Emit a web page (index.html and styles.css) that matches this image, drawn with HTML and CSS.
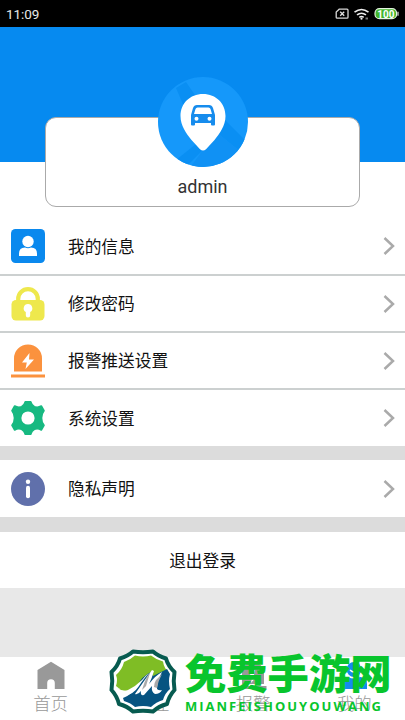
FILE: index.html
```
<!DOCTYPE html>
<html lang="zh-CN">
<head>
<meta charset="utf-8">
<title>我的</title>
<link rel="stylesheet" href="styles.css">
</head>
<body>
<div class="screen">
  <header class="status">
    <span class="time">11:09</span>
    <svg class="status-icons" width="66" height="16" viewBox="0 0 66 16">
      <path d="M4.200 3.200H12q1 0 1 1v7q0 1-1 1H2.200q-1 0-1-1V6z" fill="none" stroke="#d8d8d8" stroke-width="1.3"/>
      <path d="M5.200 5.700l4 4m0-4l-4 4" stroke="#e4e4e4" stroke-width="1.3"/>
      <g fill="none" stroke="#eee" stroke-width="1.6"><path d="M19.500 6.200q7-5.400 14 0M22 8.900q4.500-3.400 9 0M24.300 11.300q2.200-1.500 4.400 0"/></g>
      <circle cx="26.500" cy="12.700" r="1.100" fill="#eee"/><path d="M30.500 11.500h2.500v2h-2.500z" fill="#777"/>
      <rect x="40" y="2.700" width="21.600" height="10" rx="4.500" fill="#43b62d" stroke="#e4f4df" stroke-width="1.200"/>
      <path d="M63 5.800v4" stroke="#ddd" stroke-width="1.200"/>
      <text x="50.800" y="11.500" class="battery-text">100</text>
    </svg>
  </header>
  <section class="hero">
    <div class="card">
      <svg class="avatar" width="90" height="90" viewBox="0 0 90 90">
        <defs><clipPath id="disc"><circle cx="45" cy="45" r="45"/></clipPath></defs>
        <g clip-path="url(#disc)">
          <path fill="#1598fa" d="M0 0h90v90H0z"/>
          <path fill="#0a8ff3" d="M18 11l10-6 11 16-12 11zM66 42l24 24-6 10-27-22z"/>
          <path fill="#0a8ff3" d="M38 67l7 6-17 17-10-7z"/>
          <path fill="#1091f4" d="M45 73l12-19 27 22-20 20H28z"/>
        </g>
        <path fill="#fff" d="M45 17c-13 0-22.500 9.500-22.500 22 0 10 6 17.500 11 24l8.500 9.200q3 2.600 6 0L56.500 63c5-6.500 11-14 11-24 0-12.500-9.500-22-22.500-22z"/>
        <path fill="#168ced" fill-rule="evenodd" d="M39 28h12q3 0 4 3l2 7v9.500q0 1-1 1h-2q-1 0-1-1V46H37v1.500q0 1-1 1h-2q-1 0-1-1V38l2-7q1-3 4-3zm.5 2.500q-1.500 0-2 1.500l-1.500 5h18l-1.500-5q-.5-1.500-2-1.500zM38.500 39.700a2 2 0 100 4 2 2 0 000-4zm13 0a2 2 0 100 4 2 2 0 000-4z"/>
      </svg>
      <span class="name">admin</span>
    </div>
  </section>
  <main class="menu settings">
    <div class="row">
      <svg class="icon" viewBox="0 0 34 34"><rect width="34" height="34" rx="4.500" fill="#0a89ee"/><circle cx="17" cy="12.500" r="5.700" fill="#fff"/><path fill="#fff" d="M8 27v-2.500q0-6 6-6 3 1.500 6 0 6 0 6 6V27z"/></svg>
      <span class="label">我的信息</span><svg class="chevron" viewBox="0 0 12 18"><path d="M1.500 1L10 9l-8.500 8"/></svg>
    </div>
    <div class="row">
      <svg class="icon" viewBox="0 0 34 34"><path d="M7.200 15v-3a9.800 9.800 0 0119.600 0v3" fill="none" stroke="#eee84d" stroke-width="4.200"/><rect x=".5" y="13" width="33" height="20.500" rx="4.500" fill="#eee84d"/><path fill="#fff" d="M17 17a4.300 4.300 0 00-2.200 8v3.200a2.200 2.200 0 004.400 0v-3.200a4.300 4.300 0 00-2.200-8z"/></svg>
      <span class="label">修改密码</span><svg class="chevron" viewBox="0 0 12 18"><path d="M1.500 1L10 9l-8.500 8"/></svg>
    </div>
    <div class="row">
      <svg class="icon" viewBox="0 0 34 34"><path fill="#fb923e" d="M3 27.500V14.500a14 14 0 0128 0v13zM0 30.500h34v3H0z"/><path fill="#fff" d="M18.500 9L11 18.500h4.800L14.500 25 23 15.500h-5z"/></svg>
      <span class="label">报警推送设置</span><svg class="chevron" viewBox="0 0 12 18"><path d="M1.500 1L10 9l-8.500 8"/></svg>
    </div>
    <div class="row">
      <svg class="icon" viewBox="0 0 34 34"><path fill="#17b981" stroke="#17b981" stroke-width="1.600" stroke-linejoin="round" d="M14.300.8h5.400q1 3.800 3.800 5 3.500 1.200 6.800-.8l2.700 4.700q-2.500 3-2.500 7.300t2.500 7.300L30.300 29q-3.300-2-6.800-.8-2.800 1.200-3.800 5h-5.400q-1-3.800-3.800-5-3.500-1.200-6.800.8L1 24.300Q3.500 21.300 3.500 17T1 9.700L3.700 5q3.300 2 6.800.8 2.800-1.200 3.800-5z"/><circle cx="17" cy="17" r="6.600" fill="#fff"/></svg>
      <span class="label">系统设置</span><svg class="chevron" viewBox="0 0 12 18"><path d="M1.500 1L10 9l-8.500 8"/></svg>
    </div>
  </main>
  <div class="menu">
    <div class="row only">
      <svg class="icon" viewBox="0 0 34 34"><circle cx="17" cy="17" r="17" fill="#6070ab"/><circle cx="17" cy="9.800" r="2.200" fill="#fff"/><path d="M17 15.800v8.400" stroke="#fff" stroke-width="4" stroke-linecap="round"/></svg>
      <span class="label">隐私声明</span><svg class="chevron" viewBox="0 0 12 18"><path d="M1.500 1L10 9l-8.500 8"/></svg>
    </div>
  </div>
  <div class="logout">退出登录</div>
  <nav class="tabs">
    <div class="tab"><svg width="28" height="29" viewBox="0 0 28 29"><path fill="#999" d="M.5 9L14 .8 27.500 9v19h-9.700v-6a3.800 3.800 0 00-7.600 0v6H.5z"/></svg><span>首页</span></div>
    <div class="tab"><svg width="28" height="29" viewBox="0 0 28 29"><path fill="#999" d="M4 2h20v23H4z"/></svg><span>监控</span></div>
    <div class="tab"><svg width="28" height="29" viewBox="0 0 28 29"><path fill="#999" d="M3 23V12a11 11 0 0122 0v11zM.5 25h27v3H.5z"/><path fill="#fff" d="M16 8l-7 8h4l-1 6 7-8h-4z"/></svg><span>报警</span></div>
    <div class="tab"><svg width="28" height="29" viewBox="0 0 28 29"><circle cx="14" cy="8.500" r="7.500" fill="#158bee"/><path fill="#158bee" d="M1 28v-5q0-7 7-7 6 3 12 0 7 0 7 7v5z"/><path d="M10 9q4 4 8 0" fill="none" stroke="#fff" stroke-width="1.500"/></svg><span>我的</span></div>
  </nav>
  <div class="watermark">
    <svg class="emblem" width="68" height="66" viewBox="0 0 68 66">
      <path fill="#fff" stroke="#075b50" stroke-width="4" stroke-linejoin="round" d="M24 2.500Q34 4 44 2.500 49 7 57 9.500 59 17 65.500 23 64 32 65.500 41 60 47 58 55 50 57 44 62.500 34 61 24 62.500 18 57 10 55 8 47 2.500 41 4 32 2.500 23 9 17 11 9.500 19 7 24 2.500z"/>
      <path fill="#7fbd25" d="M26 6.500q8 2 16 0 5 4 12 6 1 7 6 11L44 32 28 43 11 41q-1-2-4-4 2-6 0-11 6-5 8-13 6-2 11-6.500z"/>
      <path fill="#075481" d="M42 23Q33 27 28 37q-4 8-14 12l1 3q7 2 11 6 8-2 16 0 5-5 12-7 2-7 7-11-2-8 0-15l-3-5-14 7z"/>
      <path fill="#fff" d="M10 39q3 5 9 2 8-4 14-10 3-4 7-7-7 8-10 13-6 9-14 9-5-1-6-7zM43 21l2 1q-2 7-5 13 7-9 13-12-5 9-5 17 2 2 5 1-2 4-7 4-4-2-3-8l-8 9q-4 1-3-4-3 4-6 3 9-13 17-24z"/>
      <path fill="#aaa" d="M47 31l6-6q-4 7-5 14l-3-1q0-4 2-7zM39 26l2-2-4 13-4 4q2-8 6-15z"/>
    </svg>
    <div class="wordmark">
      <div class="brand">免费手游网</div>
      <div class="pinyin">MIANFEISHOUYOUWANG</div>
    </div>
  </div>
</div>
</body>
</html>
```
FILE: styles.css
```
* { box-sizing: border-box; }
body { margin: 0; font-family: Roboto, "Noto Sans CJK SC", sans-serif; color: #111; }
.screen { position: relative; width: 405px; height: 720px; overflow: hidden; display: flex; flex-direction: column; background: #e8e8e8; }
.status { height: 27px; flex: none; background: #000; display: flex; align-items: center; justify-content: space-between; padding: 0 4px 0 6px; color: #e8e8e8; }
.time { font-size: 13.500px; letter-spacing: -.1px; padding-top: 1px; }
.battery-text { font-size: 10px; font-weight: 700; fill: #fff; text-anchor: middle; }
.hero { height: 191px; flex: none; padding: 90px 45px 0; background: linear-gradient(#068af0 135px, #fff 135px); }
.card { height: 90px; border: 1px solid #aaa; border-radius: 11px; background: #fff; display: flex; flex-direction: column; align-items: center; }
.avatar { flex: none; margin-top: -41px; }
.name { font-size: 18px; line-height: 22px; margin-top: 9px; color: #333; }
.menu { flex: none; background: #fff; border-bottom: 15px solid #dcdcdc; }
.settings { border-bottom-width: 14px; }
.row { height: 57px; display: flex; align-items: center; padding: 0 10px 0 11px; border-bottom: 2px solid #ccd0d0; }
.row:first-child { height: 58px; }
.row:last-child { height: 56px; border-bottom: 0; }
.row.only { height: 57px; }
.icon { width: 34px; height: 34px; flex: none; }
.label { margin-left: 23px; flex: 1; font-size: 16.700px; line-height: 24px; padding-top: 3px; }
.chevron { width: 12px; height: 18px; fill: none; stroke: #aaa; stroke-width: 2.500; }
.logout { height: 56px; flex: none; background: #fff; display: flex; align-items: center; justify-content: center; font-size: 16.700px; }
.tabs { height: 63px; margin-top: auto; flex: none; display: flex; background: #fff; }
.tab { flex: 1; display: flex; flex-direction: column; align-items: center; padding-top: 4px; color: #999; font-size: 17.500px; line-height: 29px; font-weight: 300; }
.tab svg { flex: none; }
.watermark { position: absolute; left: 109px; bottom: 5px; display: flex; gap: 8px; }
.emblem { flex: none; }
.wordmark { height: 66px; color: #08c52d; white-space: nowrap; }
.brand { font-family: "Noto Sans CJK SC", sans-serif; font-size: 41.300px; line-height: 44px; height: 48px; font-weight: 900; }
.pinyin { font-family: "Open Sans", sans-serif; font-weight: 700; font-size: 13px; line-height: 18px; letter-spacing: 2px; }
```
